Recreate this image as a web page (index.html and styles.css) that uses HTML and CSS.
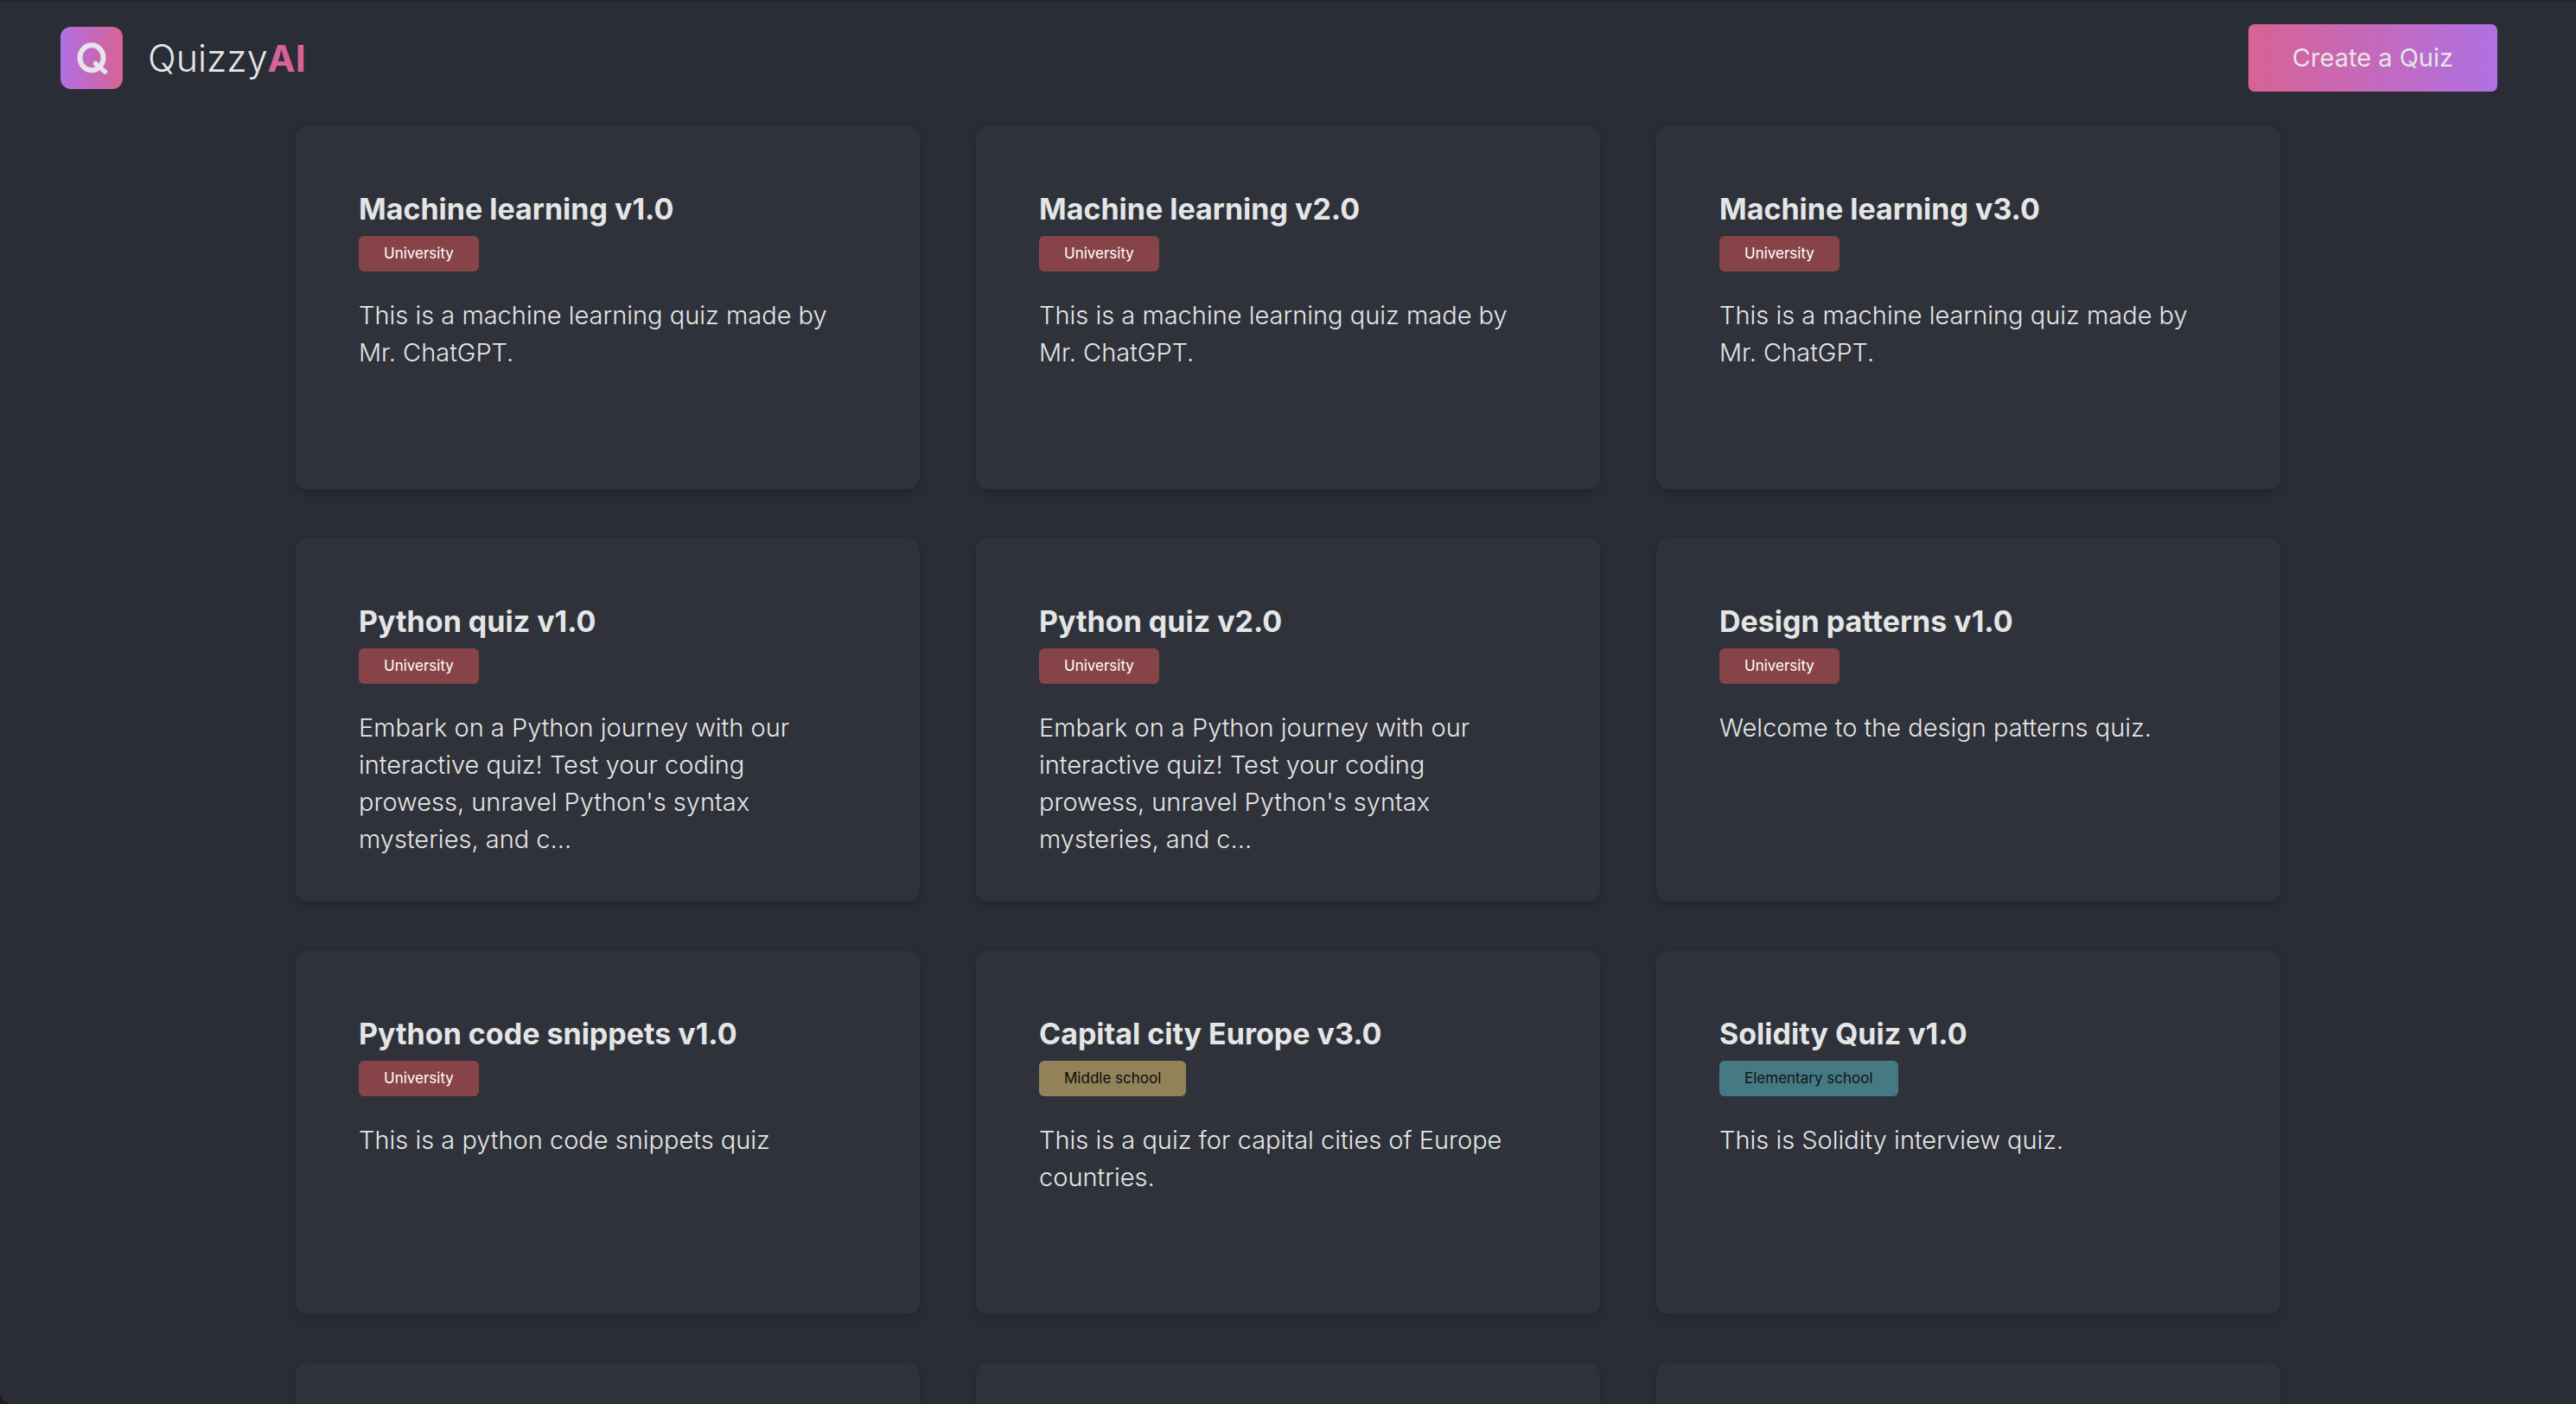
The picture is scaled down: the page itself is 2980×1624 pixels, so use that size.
FILE: index.html
```html
<!DOCTYPE html>
<html lang="en">
<head>
<meta charset="utf-8">
<title>QuizzyAI</title>
<link rel="stylesheet" href="styles.css">
</head>
<body>
<header class="topbar">
  <a class="brand" href="#">
    <svg class="brand-mark" viewBox="0 0 72 72" aria-hidden="true">
      <defs>
        <linearGradient id="mark" x1="0" y1="0" x2="1" y2="0">
          <stop offset="0" stop-color="#b070e4"/>
          <stop offset="1" stop-color="#d86294"/>
        </linearGradient>
      </defs>
      <rect width="72" height="72" rx="12" fill="url(#mark)"/>
      <ellipse cx="36" cy="35.700" rx="13.500" ry="14.500" fill="none" stroke="#e6e4ea" stroke-width="6"/>
      <path d="M40.500 42.500 L51.500 52" fill="none" stroke="#e6e4ea" stroke-width="5.500" stroke-linecap="round"/>
    </svg>
    <span class="brand-name">Quizzy<strong class="brand-accent">AI</strong></span>
  </a>
  <button class="create" type="button">Create a Quiz</button>
</header>
<main class="grid">
  <article class="card">
    <h2 class="title">Machine learning v1.0</h2>
    <span class="badge university">University</span>
    <p class="text">This is a machine learning quiz made by Mr. ChatGPT.</p>
  </article>
  <article class="card">
    <h2 class="title">Machine learning v2.0</h2>
    <span class="badge university">University</span>
    <p class="text">This is a machine learning quiz made by Mr. ChatGPT.</p>
  </article>
  <article class="card">
    <h2 class="title">Machine learning v3.0</h2>
    <span class="badge university">University</span>
    <p class="text">This is a machine learning quiz made by Mr. ChatGPT.</p>
  </article>
  <article class="card">
    <h2 class="title">Python quiz v1.0</h2>
    <span class="badge university">University</span>
    <p class="text">Embark on a Python journey with our interactive quiz! Test your coding prowess, unravel Python's syntax mysteries, and c...</p>
  </article>
  <article class="card">
    <h2 class="title">Python quiz v2.0</h2>
    <span class="badge university">University</span>
    <p class="text">Embark on a Python journey with our interactive quiz! Test your coding prowess, unravel Python's syntax mysteries, and c...</p>
  </article>
  <article class="card">
    <h2 class="title">Design patterns v1.0</h2>
    <span class="badge university">University</span>
    <p class="text">Welcome to the design patterns quiz.</p>
  </article>
  <article class="card">
    <h2 class="title">Python code snippets v1.0</h2>
    <span class="badge university">University</span>
    <p class="text">This is a python code snippets quiz</p>
  </article>
  <article class="card">
    <h2 class="title">Capital city Europe v3.0</h2>
    <span class="badge middle">Middle school</span>
    <p class="text">This is a quiz for capital cities of Europe countries.</p>
  </article>
  <article class="card">
    <h2 class="title">Solidity Quiz v1.0</h2>
    <span class="badge elementary">Elementary school</span>
    <p class="text">This is Solidity interview quiz.</p>
  </article>
  <article class="card"></article>
  <article class="card"></article>
  <article class="card"></article>
</main>
</body>
</html>
```
FILE: styles.css
```css
* {
  box-sizing: border-box;
}

html {
  height: 100%;
  background: #1c1c1e;
}

body {
  height: 100%;
  margin: 0;
  overflow: hidden;
  border-top: 2px solid #25282b;
  border-bottom-left-radius: 14px;
  background: #2a2d35;
  color: #e5e5e6;
  font-family: Inter, "Liberation Sans", sans-serif;
  font-size: 29px;
  font-weight: 350;
}

.topbar {
  display: flex;
  align-items: center;
  justify-content: space-between;
  padding: 26px 91px 40px 70px;
}

.brand {
  display: flex;
  align-items: center;
  gap: 29px;
  color: inherit;
  text-decoration: none;
}

.brand-mark {
  width: 72px;
  height: 72px;
}

.brand-name {
  font-size: 43px;
  line-height: 56px;
}

.brand-accent {
  color: #d86297;
  font-weight: 700;
}

.create {
  padding: 17px 51px;
  border: 0;
  border-radius: 7px;
  background: linear-gradient(90deg, #d86294, #b070e4);
  color: inherit;
  font: 400 29px/44px Inter, "Liberation Sans", sans-serif;
}

.grid {
  display: grid;
  grid-template-columns: repeat(3, 1fr);
  gap: 57px 65px;
  max-width: 2296px;
  margin: 0 auto;
}

.card {
  min-height: 420px;
  padding: 73px 73px 40px;
  border-radius: 14px;
  background: #2f323a;
  box-shadow: 0 4px 8px rgba(30, 30, 30, 0.5);
}

.title {
  margin: 0 0 8px;
  font-size: 34px;
  font-weight: 650;
  line-height: 46px;
}

.badge {
  display: block;
  width: fit-content;
  padding: 8px 29px;
  border-radius: 6px;
  font-size: 17px;
  font-weight: 400;
  line-height: 25px;
}

.university {
  background: #874448;
  color: #fff;
}

.middle {
  background: #918259;
  color: #0b0b0b;
}

.elementary {
  background: #457983;
  color: #101517;
}

.text {
  margin: 29px 0 0;
  line-height: 43px;
}
```
